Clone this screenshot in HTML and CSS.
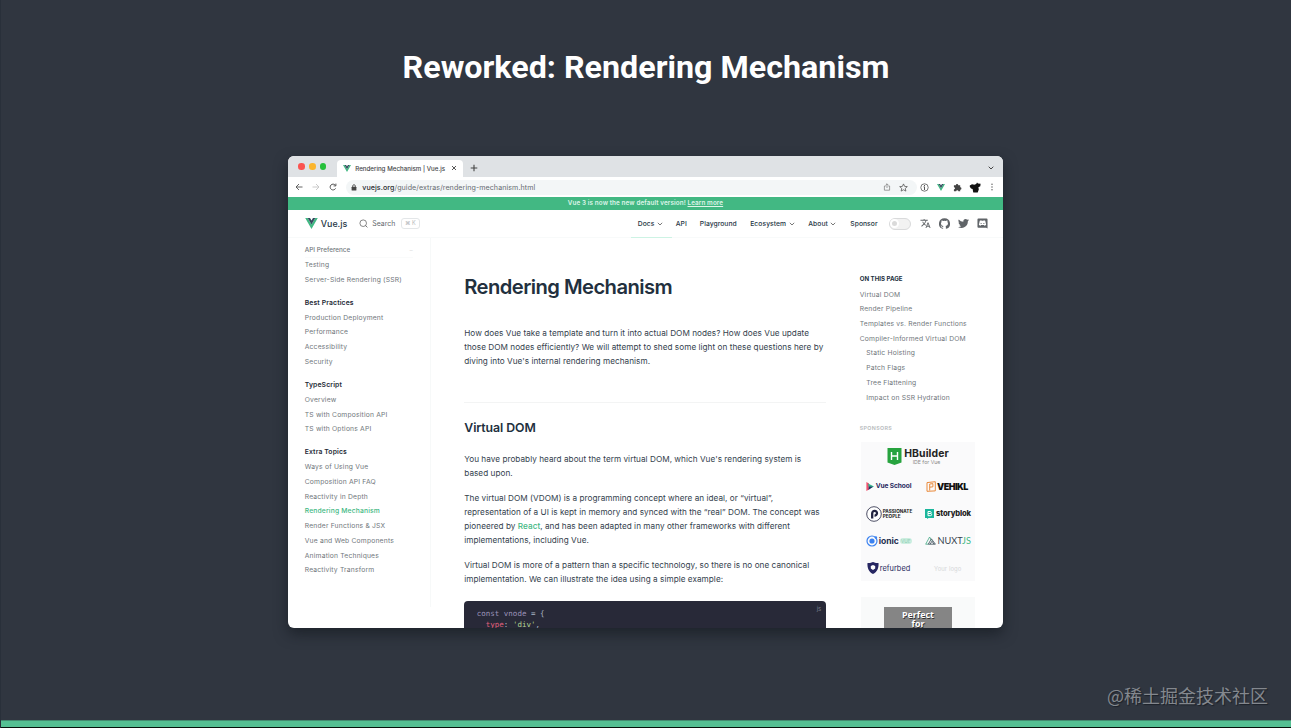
FILE: index.html
```html
<!DOCTYPE html>
<html lang="en">
<head>
<meta charset="utf-8">
<title>Reworked: Rendering Mechanism</title>
<link rel="stylesheet" href="styles.css">
</head>
<body>
<svg class="defs" width="0" height="0">
  <symbol id="vue" viewBox="0 0 24 21"><path fill="#41b883" d="M0 0h4.800L12 12.400 19.200 0H24L12 20.800z"/><path fill="#34495e" d="M4.800 0h4.400L12 4.800 14.800 0h4.400L12 12.400z"/></symbol>
  <symbol id="chev" viewBox="0 0 6 4"><path d="M.8.8 3 3 5.200.8" fill="none" stroke="currentColor" stroke-width=".8"/></symbol>
</svg>
<main class="slide">
  <h1 class="slide-title">Reworked: Rendering Mechanism</h1>
  <section class="window">
    <div class="tabs">
      <div class="lights"><i class="red"></i><i class="yellow"></i><i class="green"></i></div>
      <div class="tab">
        <svg class="favicon"><use href="#vue"/></svg>
        <span class="tab-title">Rendering Mechanism | Vue.js</span>
        <svg class="close" viewBox="0 0 6 6"><path d="m1 1 4 4M5 1 1 5" stroke="#444" stroke-width=".9"/></svg>
      </div>
      <svg class="plus" viewBox="0 0 8 8"><path d="M4 .7v6.600M.7 4h6.600" stroke="#444" stroke-width="1.100"/></svg>
      <svg class="tab-more" viewBox="0 0 6 4"><path d="M.7.7 3 3 5.300.7" fill="none" stroke="#444" stroke-width="1"/></svg>
    </div>
    <div class="toolbar">
      <svg class="tool back" viewBox="0 0 8 8"><path d="M7.500 4H1M4 1 1 4l3 3" fill="none" stroke="#555" stroke-width=".9"/></svg>
      <svg class="tool fwd" viewBox="0 0 8 8"><path d="M.5 4H7M4 1l3 3-3 3" fill="none" stroke="#c4c4c4" stroke-width=".9"/></svg>
      <svg class="tool reload" viewBox="0 0 8 8"><path d="M6.600 5.400A2.900 2.900 0 1 1 6.300 2.200M6.900.6v2.300H4.600" fill="none" stroke="#444" stroke-width=".9"/></svg>
      <div class="address">
        <svg class="lock" viewBox="0 0 6 7"><rect x=".6" y="2.800" width="4.800" height="3.800" rx=".5" fill="#444"/><path d="M1.700 3V2a1.300 1.300 0 0 1 2.600 0v1" fill="none" stroke="#444" stroke-width=".8"/></svg>
        <span class="url"><b>vuejs.org</b>/guide/extras/rendering-mechanism.html</span>
        <svg class="share" viewBox="0 0 8 8"><path d="M2.700 3H1.400v4.200h5.200V3H5.300M4 5V.8M2.600 2.200 4 .8l1.400 1.400" fill="none" stroke="#777" stroke-width=".7"/></svg>
        <svg class="star" viewBox="0 0 8 8"><path d="m4 .8 1 2.200 2.400.2-1.800 1.600.5 2.400L4 6 1.900 7.200l.5-2.400L.6 3.200 3 3z" fill="none" stroke="#555" stroke-width=".7"/></svg>
      </div>
      <svg class="ext info" viewBox="0 0 8 8"><circle cx="4" cy="4" r="3.300" fill="none" stroke="#555" stroke-width=".7"/><path d="M4 1.800v.9M4 3.400v2.800M3.200 3.400H4" stroke="#555" stroke-width=".9"/></svg>
      <svg class="ext vext"><use href="#vue"/></svg>
      <svg class="ext puzzle" viewBox="0 0 8 8"><path fill="#444" d="M.8 2h1.700a1.100 1.100 0 1 1 2.200 0h1.700v1.700a1.100 1.100 0 1 1 0 2.200v1.500H4.800a1 1 0 0 0-2 0h-2V5.700a1 1 0 0 0 0-2z"/></svg>
      <svg class="ext avatar" viewBox="0 0 12 11"><path fill="#111" d="M.8 3.400 3 2.300l2.300.5L7.200 2 8 .6l1 1 2.600.2-.3 2.500-1.900 1 .4 2.100-1.100 3.100H4.300L3.600 7 2 6.600.8 4.800z"/></svg>
      <svg class="ext dots" viewBox="0 0 2 8"><g fill="#555"><circle cx="1" cy="1.200" r=".7"/><circle cx="1" cy="4" r=".7"/><circle cx="1" cy="6.800" r=".7"/></g></svg>
    </div>
    <div class="banner"><span>Vue 3 is now the new default version! <u>Learn more</u></span></div>
    <nav class="nav">
      <svg class="brand-logo"><use href="#vue"/></svg>
      <span class="brand">Vue.js</span>
      <svg class="search-icon" viewBox="0 0 9 9"><circle cx="4.200" cy="4.200" r="3.300" fill="none" stroke="#555" stroke-width=".7"/><path d="m6.500 6.500 1.900 1.900" stroke="#555" stroke-width=".8"/></svg>
      <span class="search">Search</span>
      <span class="kbd">⌘ K</span>
      <div class="menu">
        <span class="item docs">Docs <svg><use href="#chev"/></svg></span>
        <span class="item api">API</span>
        <span class="item play">Playground</span>
        <span class="item eco">Ecosystem <svg><use href="#chev"/></svg></span>
        <span class="item about">About <svg><use href="#chev"/></svg></span>
        <span class="item sponsor">Sponsor</span>
        <span class="switch"><i></i></span>
        <svg class="social" viewBox="0 0 24 24"><path fill="#606468" d="m12.900 15.100-2.500-2.500c1.700-1.900 3-4.100 3.700-6.500H17V4h-7V2H8v2H1v2h11.200C11.500 7.900 10.400 9.700 9 11.300 8.100 10.300 7.300 9.200 6.700 8h-2c.7 1.600 1.700 3.200 3 4.600l-5.100 5L4 19l5-5 3.100 3.100zM18.500 10h-2L12 22h2l1.100-3h4.800l1.100 3h2zm-2.600 7 1.600-4.300 1.600 4.300z"/></svg>
        <svg class="social" viewBox="0 0 24 24"><path fill="#606468" d="M12 .3a12 12 0 0 0-3.800 23.400c.6.100.8-.3.800-.6v-2c-3.300.7-4-1.600-4-1.600-.6-1.400-1.400-1.800-1.400-1.800-1-.7.1-.7.100-.7 1.200 0 1.900 1.200 1.900 1.200 1 1.800 2.800 1.300 3.500 1 0-.8.400-1.300.7-1.600-2.700-.3-5.500-1.300-5.500-6 0-1.200.5-2.300 1.300-3.100-.2-.4-.6-1.600 0-3.200 0 0 1-.3 3.400 1.200a11.500 11.500 0 0 1 6 0c2.300-1.500 3.300-1.200 3.300-1.200.6 1.600.2 2.800 0 3.200.9.800 1.300 1.900 1.300 3.200 0 4.600-2.800 5.600-5.500 5.900.5.400.9 1 .9 2.200v3.300c0 .3.100.7.800.6A12 12 0 0 0 12 .3"/></svg>
        <svg class="social" viewBox="0 0 24 24"><path fill="#606468" d="M24 4.600a10 10 0 0 1-2.800.8 5 5 0 0 0 2.100-2.700c-1 .6-2 1-3.100 1.200a4.900 4.900 0 0 0-8.400 4.500A14 14 0 0 1 1.700 3.100a4.900 4.900 0 0 0 1.500 6.600 5 5 0 0 1-2.200-.6 4.900 4.900 0 0 0 3.900 4.900 5 5 0 0 1-2.200.1 4.900 4.900 0 0 0 4.600 3.400A9.900 9.900 0 0 1 0 19.500a14 14 0 0 0 21.500-12.400A10 10 0 0 0 24 4.600"/></svg>
        <svg class="social" viewBox="0 0 24 24"><path fill="#606468" fill-rule="evenodd" d="M3 1h18a2 2 0 0 1 2 2v20l-3-2H3a2 2 0 0 1-2-2V3a2 2 0 0 1 2-2m3 5-2 9 4 2 1-2h6l1 2 4-2-2-9-3-1-1 1h-4L9 5zm2 5h2v2H8zm6 0h2v2h-2z"/></svg>
      </div>
    </nav>
    <div class="page">
      <aside class="sidebar">
        <div class="pref"><span>API Preference</span><em>–</em></div>
        <p>Testing</p><p>Server-Side Rendering (SSR)</p>
        <h4>Best Practices</h4><p>Production Deployment</p><p>Performance</p><p>Accessibility</p><p>Security</p>
        <h4>TypeScript</h4><p>Overview</p><p>TS with Composition API</p><p>TS with Options API</p>
        <h4>Extra Topics</h4><p>Ways of Using Vue</p><p>Composition API FAQ</p><p>Reactivity in Depth</p><p class="active">Rendering Mechanism</p><p>Render Functions &amp; JSX</p><p>Vue and Web Components</p><p>Animation Techniques</p><p>Reactivity Transform</p>
      </aside>
      <article class="content">
        <h2 class="title">Rendering Mechanism</h2>
        <p>How does Vue take a template and turn it into actual DOM nodes? How does Vue update<br>those DOM nodes efficiently? We will attempt to shed some light on these questions here by<br>diving into Vue's internal rendering mechanism.</p>
        <h3>Virtual DOM</h3>
        <p>You have probably heard about the term virtual DOM, which Vue's rendering system is<br>based upon.</p>
        <p>The virtual DOM (VDOM) is a programming concept where an ideal, or “virtual”,<br>representation of a UI is kept in memory and synced with the “real” DOM. The concept was<br>pioneered by <a>React</a>, and has been adapted in many other frameworks with different<br>implementations, including Vue.</p>
        <p>Virtual DOM is more of a pattern than a specific technology, so there is no one canonical<br>implementation. We can illustrate the idea using a simple example:</p>
        <div class="code">
          <div class="lines">
            <div class="line"><span class="kw">const</span><span class="id"> vnode</span><span> = {</span></div>
            <div class="line"><span class="key">  type</span><span>: </span><span class="str">'div'</span><span>,</span></div>
          </div>
          <span class="lang">js</span>
        </div>
      </article>
      <aside class="outline">
        <h5>ON THIS PAGE</h5>
        <p>Virtual DOM</p><p>Render Pipeline</p><p>Templates vs. Render Functions</p><p>Compiler-Informed Virtual DOM</p>
        <div class="nested"><p>Static Hoisting</p><p>Patch Flags</p><p>Tree Flattening</p><p>Impact on SSR Hydration</p></div>
        <h6>SPONSORS</h6>
        <div class="sponsors">
          <div class="wide">
            <svg class="hb-icon" viewBox="0 0 15 17"><path fill="#27a33f" d="M.5 0h14v14.500l-7 2.500-7-2.500z"/><path d="M4.500 4v8M10.500 4v8M4.500 8h6" stroke="#fff" stroke-width="1.400" fill="none"/></svg>
            <span class="hb"><b>HBuilder</b><small>IDE for Vue</small></span>
          </div>
          <div class="cell">
            <svg class="vs-icon" viewBox="0 0 8 9"><path fill="#f0506e" d="M.4 0 3 1.500v6L.4 9z"/><path fill="#36b58b" d="M2 1.500 8 4.500 3 7z"/><path fill="#24306a" d="m3 4.500 4 .2L2.400 8z"/></svg>
            <b class="vs">Vue School</b>
          </div>
          <div class="cell right">
            <svg class="vk-icon" viewBox="0 0 10 11"><path d="M1 1.600 9.300.7v9.200L1 10.300zM3.700 9.500V3l3.200-.4v3.200l-3.200.4" fill="none" stroke="#e98a3c" stroke-width="1"/></svg>
            <b class="vk">VEHIKL</b>
          </div>
          <div class="cell">
            <svg class="pp-icon" viewBox="0 0 16 16"><circle cx="8" cy="8" r="7.300" fill="#fff" stroke="#222440" stroke-width=".8"/><path d="M6.200 12.500V7.200A2.400 2.400 0 1 1 8.500 9.600" fill="none" stroke="#222440" stroke-width="2.300"/></svg>
            <b class="pp">PASSIONATE<br>PEOPLE</b>
          </div>
          <div class="cell right">
            <svg class="sb-icon" viewBox="0 0 9 10"><path fill="#1bb69c" d="M0 0h9v9H3.500L2 10V9H0z"/><path d="M3 2.500h2.200a1 1 0 0 1 0 2H3zm0 2h2.500a1 1 0 0 1 0 2.200H3z" fill="none" stroke="#fff"/></svg>
            <b class="sb">storyblok</b>
          </div>
          <div class="cell">
            <svg class="io-icon" viewBox="0 0 12 12"><circle cx="6" cy="6" r="5" fill="none" stroke="#3b82f0" stroke-width="1.200"/><circle cx="6" cy="6" r="2.600" fill="#3b82f0"/><circle cx="9.900" cy="2.500" r="1.200" fill="#3b82f0"/></svg>
            <b class="io">ionic</b><span class="vue-pill">VUE</span>
          </div>
          <div class="cell right">
            <svg class="nx-icon" viewBox="0 0 11 9"><path d="M3.500 8.200H.7L4.600 1l2 3.500" fill="none" stroke="#41a884" stroke-width=".8"/><path d="M3.300 8.200 6.400 2.800l4 5.400zM5 8.200l2-3 2 3" fill="none" stroke="#394b57" stroke-width=".8"/></svg>
            <span class="nx">NUXT<i>JS</i></span>
          </div>
          <div class="cell">
            <svg class="rf-icon" viewBox="0 0 12 12"><path fill="#272762" d="M6 0c2 1 4 1 5.500 1C12 6 10 10 6 12 2 10 0 6 .5 1 2 1 4 1 6 0"/><path fill="#fff" d="m6 3 2.200 1v2.400L6 8 3.800 6.400V4z"/></svg>
            <span class="rf">refurbed</span>
          </div>
          <div class="cell right"><span class="yl">Your logo</span></div>
        </div>
        <div class="ad"><b>Perfect<br>for</b></div>
      </aside>
    </div>
  </section>
  <div class="watermark">@稀土掘金技术社区</div>
  <footer class="strip"></footer>
</main>
</body>
</html>
```
FILE: styles.css
```css
* { box-sizing: border-box; margin: 0; padding: 0; }
body { width: 1291px; height: 728px; overflow: hidden; font-family: Inter, sans-serif; }
svg { display: block; flex: none; }
.defs { position: absolute; }
.slide { position: relative; width: 1291px; height: 728px; background: #303640; display: flex; flex-direction: column; align-items: center; border-left: 1px solid #29303a; }
.slide-title { margin-top: 47px; height: 40px; font: 700 32.250px/40px Roboto, sans-serif; color: #fff; white-space: nowrap; }
.window { width: 715.500px; height: 472.500px; margin-top: 68.500px; margin-right: 1px; border-radius: 6px; overflow: hidden; background: #fff; box-shadow: 0 6px 14px rgba(15, 20, 26, .55); display: flex; flex-direction: column; flex: none; }

.tabs { height: 21.500px; background: #dfe2e5; display: flex; align-items: center; flex: none; }
.lights { display: flex; gap: 4.200px; padding-left: 10.500px; width: 49px; }
.lights i { width: 6.600px; height: 6.600px; border-radius: 50%; }
.red { background: #fb5350; }
.yellow { background: #fbb52d; }
.green { background: #25c03b; }
.tab { align-self: flex-end; width: 126px; height: 17.500px; background: #fff; border-radius: 4px 4px 0 0; display: flex; align-items: center; padding: 0 6px; }
.favicon { width: 8px; height: 7px; }
.tab-title { margin-left: 4.500px; width: 97px; font-size: 6.200px; letter-spacing: .03px; color: #3c4043; white-space: nowrap; -webkit-text-stroke: .1px #3c4043; }
.close { width: 6px; height: 6px; }
.plus { width: 8px; height: 8px; margin-left: 7.500px; margin-top: 3px; }
.tab-more { width: 6px; height: 4px; margin-left: auto; margin-right: 9px; margin-top: 4px; }

.toolbar { height: 20px; display: flex; align-items: center; padding-left: 7px; flex: none; }
.tool { width: 8px; height: 8px; margin-right: 9px; }
.address { width: 571px; height: 15px; border-radius: 8px; background: #f3f6f7; display: flex; align-items: center; padding-left: 5px; }
.lock { width: 6px; height: 7px; }
.url { margin-left: 5.500px; font-size: 7.100px; letter-spacing: .08px; color: #666b70; white-space: nowrap; }
.url b { font-weight: 500; color: #2a2c2f; }
.share { width: 8px; height: 8px; margin-left: auto; }
.star { width: 9px; height: 9px; margin: 0 8.500px 0 8px; }
.info { width: 9px; height: 9px; margin-left: 3px; }
.vext { width: 8px; height: 7px; margin-left: 8.500px; }
.puzzle { width: 9px; height: 9px; margin-left: 8px; }
.avatar { width: 12px; height: 11px; margin-left: 6.500px; }
.dots { width: 2px; height: 8px; margin-left: 10px; }

.banner { height: 12.500px; background: #42b883; color: #dff5e9; text-align: center; font-size: 6.300px; letter-spacing: .11px; line-height: 13px; font-weight: 600; flex: none; }

.nav { height: 28.500px; display: flex; align-items: center; padding: 1px 0 0 17px; border-bottom: 1px solid #f8fafa; color: #263645; flex: none; }
.brand-logo { width: 13px; height: 11px; }
.brand { margin-left: 3px; width: 38px; font-size: 8.900px; font-weight: 500; }
.search-icon { width: 9px; height: 9px; }
.search { margin-left: 4.500px; width: 28.500px; font-size: 6.900px; letter-spacing: .05px; color: #62676c; }
.kbd { width: 19px; height: 11px; border: 1px solid #e3e6e8; border-radius: 3px; font-size: 5.500px; line-height: 9px; text-align: center; color: #b5b8bb; }
.menu { margin-left: auto; margin-right: 15px; height: 100%; display: flex; align-items: center; }
.item { height: 27.500px; display: flex; align-items: center; font-size: 6.750px; letter-spacing: .05px; font-weight: 500; white-space: nowrap; }
.item svg { width: 6px; height: 4px; margin-left: 2.500px; color: #555; }
.docs { width: 41px; margin-right: 4px; padding-left: 7px; border-bottom: 1px solid #cdf3e4; border-top: 1px solid transparent; }
.api { width: 24px; }
.play { width: 50.500px; }
.eco { width: 58px; }
.about { width: 42px; }
.sponsor { width: 38.500px; }
.switch { width: 22px; height: 12px; border: 1px solid #d9dadb; border-radius: 6px; background: #f2f2f2; margin-right: 9.500px; }
.switch i { display: block; width: 9px; height: 9px; margin: .5px; border-radius: 50%; background: #dadada; border: 2.500px solid #fff; }
.social { width: 11px; height: 11px; margin-right: 8px; }
.social:last-child { margin-right: 0; }

.page { flex: 1; min-height: 0; display: flex; overflow: hidden; }
.sidebar { width: 143.500px; height: 369px; padding: 5px 0 0 17px; border-right: 1px solid #f7f9f9; font-size: 6.750px; letter-spacing: .18px; color: #71777c; flex: none; white-space: nowrap; }
.sidebar p, .sidebar h4, .pref { height: 14.760px; line-height: 14.760px; }
.sidebar h4 { margin-top: 8.400px; font-size: 6.800px; letter-spacing: .13px; font-weight: 600; color: #1e2a36; }
.pref { width: 108px; display: flex; justify-content: space-between; font-size: 6.300px; letter-spacing: .03px; font-weight: 500; border-bottom: 1px solid #fafbfb; margin-bottom: .3px; }
.pref em { color: #ddd; }
.sidebar .active { color: #42b883; font-weight: 500; letter-spacing: .16px; }

.content { width: 362px; margin-left: 33px; padding-top: 36px; flex: none; color: #34414d; }
.title { height: 26px; line-height: 26px; font-size: 20.200px; font-weight: 600; letter-spacing: -.56px; color: #22303e; margin-bottom: 25.500px; white-space: nowrap; }
.content p { font-size: 8.200px; letter-spacing: .035px; line-height: 14.250px; margin-bottom: 10.300px; white-space: nowrap; }
.content a { color: #42b883; font-weight: 500; }
.content h3 { margin-top: 34px; border-top: 1px solid #f3f4f4; padding-top: 16px; height: 34px; line-height: 18px; font-size: 12.300px; font-weight: 600; letter-spacing: -.07px; color: #22303e; margin-bottom: 15.500px; }
.code { height: 60px; margin-top: 14.500px; background: #282938; border-radius: 4px 4px 0 0; padding: 8px 5px 0 12.500px; display: flex; justify-content: space-between; }
.line { display: flex; white-space: pre; font: 7.500px/10.800px "DejaVu Sans Mono", monospace; color: #a9b4c4; }
.kw, .id { color: #9b93b8; }
.key { color: #e0607c; }
.str { color: #b3d694; }
.lang { font-size: 6px; line-height: 1; margin-top: -3px; color: #777b88; }

.outline { width: 116px; margin-left: 33.500px; padding-top: 33px; font-size: 6.750px; letter-spacing: .18px; color: #71777c; flex: none; white-space: nowrap; }
.outline h5 { height: 16.500px; line-height: 15px; font-size: 6.100px; letter-spacing: .02px; font-weight: 700; color: #22303e; }
.outline p { height: 14.740px; line-height: 14.740px; }
.nested { padding-left: 6.500px; }
.outline h6 { margin-top: 15.200px; height: 15px; line-height: 15px; font-size: 5.300px; font-weight: 600; letter-spacing: .37px; color: #b5b8bb; }
.sponsors { margin: 6px 0 0 1.500px; width: 113.500px; display: grid; grid-template-columns: 1fr 1fr; grid-template-rows: 30.500px repeat(4, 27.300px); background: #fafafb; letter-spacing: 0; }
.cell { display: flex; align-items: center; padding-left: 4.500px; padding-top: 1px; }
.right { padding-left: 6.500px; }
.wide { grid-column: span 2; display: flex; align-items: center; padding-left: 25.500px; }
.hb-icon { width: 15px; height: 17px; }
.hb { margin-left: 2.500px; display: flex; flex-direction: column; align-items: center; color: #242424; }
.hb b { font-size: 10.400px; line-height: 10px; letter-spacing: .1px; }
.hb small { font-size: 5.200px; line-height: 6px; color: #888; }
.vs-icon { width: 8px; height: 9px; }
.vs { margin-left: 2px; font-size: 6.600px; letter-spacing: -.1px; color: #27285e; }
.vk-icon { width: 10px; height: 11px; margin-left: 1.500px; }
.vk { margin-left: 1px; font-size: 9px; font-weight: 900; letter-spacing: -.5px; color: #111; }
.pp-icon { width: 16px; height: 16px; }
.pp { margin-left: 1px; font-size: 4.650px; line-height: 4.400px; color: #222; }
.sb-icon { width: 9px; height: 10px; }
.sb { margin-left: 2.500px; font-size: 7.600px; font-weight: 800; letter-spacing: -.12px; color: #222; }
.io-icon { width: 12px; height: 12px; }
.io { margin-left: 1px; font-size: 8.600px; letter-spacing: -.1px; color: #263152; }
.vue-pill { margin-left: 1px; padding: 0 1.500px; border-radius: 3px; background: #cdeee0; color: #88cdb2; font-size: 4.700px; line-height: 6px; }
.nx-icon { width: 11px; height: 9px; }
.nx { margin-left: 2px; font: 9.200px/12px Lato, sans-serif; color: #34424e; }
.nx i { font-style: normal; color: #41b883; }
.rf-icon { width: 12px; height: 12px; margin-left: 1px; }
.rf { margin-left: 1px; font-size: 7.400px; letter-spacing: .03px; color: #2b2b60; }
.yl { margin-left: 9.500px; font-size: 5.900px; letter-spacing: .1px; color: #d5d7d9; }
.ad { width: 113.500px; height: 60px; margin: 16px 0 0 1.500px; padding: 10px 23px 0; background: #f9fafa; letter-spacing: 0; }
.ad b { display: block; height: 60px; background: #858585; padding-top: 2.500px; text-align: center; font: 700 8.900px/9.200px "Open Sans", sans-serif; color: #fff; text-shadow: .7px .7px 0 #333; }

.watermark { position: absolute; right: 23px; bottom: 21px; font: 18px/24px "Noto Sans CJK SC", sans-serif; color: #84888e; text-shadow: 1px 1px 1px #1b2028; white-space: nowrap; }
.strip { width: 1291px; height: 8px; margin-top: auto; background: #55c093; border-top: 1px solid #438b70; border-bottom: 1px solid #06130d; flex: none; }
```
